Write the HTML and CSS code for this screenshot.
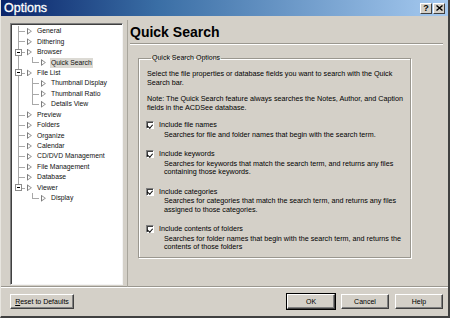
FILE: index.html
```html
<!DOCTYPE html>
<html lang="en">
<head>
    <meta charset="UTF-8">
    <title>Options</title>
    <link rel="stylesheet" href="styles.css">
</head>
<body>
    <div class="window">
        <!-- Title bar -->
        <div class="titlebar">
            <span class="title">Options</span>
            <div class="caption-btns">
                <span class="cap-btn help">?</span>
                <span class="cap-btn">
                    <svg width="7" height="6" viewBox="0 0 7 6"><path d="M0.5 0.5 L6.5 5.5 M6.5 0.5 L0.5 5.5" stroke="#000" stroke-width="1.4"/></svg>
                </span>
            </div>
        </div>

        <div class="main">
            <!-- Options tree -->
            <div class="tree">
                <div class="node"><span class="guide tee"></span><span class="arrow"></span><span class="label">General</span></div>
                <div class="node"><span class="guide tee"></span><span class="arrow"></span><span class="label">Dithering</span></div>
                <div class="node"><span class="guide tee"><span class="box"></span></span><span class="arrow"></span><span class="label">Browser</span></div>
                <div class="node"><span class="guide pipe"></span><span class="guide elbow"></span><span class="arrow"></span><span class="label selected">Quick Search</span></div>
                <div class="node"><span class="guide tee"><span class="box"></span></span><span class="arrow"></span><span class="label">File List</span></div>
                <div class="node"><span class="guide pipe"></span><span class="guide tee"></span><span class="arrow"></span><span class="label">Thumbnail Display</span></div>
                <div class="node"><span class="guide pipe"></span><span class="guide tee"></span><span class="arrow"></span><span class="label">Thumbnail Ratio</span></div>
                <div class="node"><span class="guide pipe"></span><span class="guide elbow"></span><span class="arrow"></span><span class="label">Details View</span></div>
                <div class="node"><span class="guide tee"></span><span class="arrow"></span><span class="label">Preview</span></div>
                <div class="node"><span class="guide tee"></span><span class="arrow"></span><span class="label">Folders</span></div>
                <div class="node"><span class="guide tee"></span><span class="arrow"></span><span class="label">Organize</span></div>
                <div class="node"><span class="guide tee"></span><span class="arrow"></span><span class="label">Calendar</span></div>
                <div class="node"><span class="guide tee"></span><span class="arrow"></span><span class="label">CD/DVD Management</span></div>
                <div class="node"><span class="guide tee"></span><span class="arrow"></span><span class="label">File Management</span></div>
                <div class="node"><span class="guide tee"></span><span class="arrow"></span><span class="label">Database</span></div>
                <div class="node"><span class="guide elbow"><span class="box"></span></span><span class="arrow"></span><span class="label">Viewer</span></div>
                <div class="node"><span class="guide"></span><span class="guide elbow"></span><span class="arrow"></span><span class="label">Display</span></div>
            </div>

            <!-- Quick Search page -->
            <div class="page">
                <h1>Quick Search</h1>
                <div class="rule"></div>

                <fieldset class="group">
                    <legend>Quick Search Options</legend>
                    <p>Select the file properties or database fields you want to search with the Quick<br>Search bar.</p>
                    <p>Note: The Quick Search feature always searches the Notes, Author, and Caption<br>fields in the ACDSee database.</p>

                    <div class="opt">
                        <div class="check-row"><span class="checkbox"></span>Include file names</div>
                        <div class="desc">Searches for file and folder names that begin with the search term.</div>
                    </div>
                    <div class="opt">
                        <div class="check-row"><span class="checkbox"></span>Include keywords</div>
                        <div class="desc">Searches for keywords that match the search term, and returns any files<br>containing those keywords.</div>
                    </div>
                    <div class="opt">
                        <div class="check-row"><span class="checkbox"></span>Include categories</div>
                        <div class="desc">Searches for categories that match the search term, and returns any files<br>assigned to those categories.</div>
                    </div>
                    <div class="opt">
                        <div class="check-row"><span class="checkbox"></span>Include contents of folders</div>
                        <div class="desc">Searches for folder names that begin with the search term, and returns the<br>contents of those folders</div>
                    </div>
                </fieldset>
            </div>
        </div>

        <!-- Dialog buttons -->
        <div class="footer">
            <button class="btn reset"><u>R</u>eset to Defaults</button>
            <div class="btn-group">
                <button class="btn default">OK</button>
                <button class="btn">Cancel</button>
                <button class="btn">Help</button>
            </div>
        </div>
    </div>
</body>
</html>
```

FILE: styles.css
```css
body {
    margin: 0;
    padding: 0;
    font-family: "Liberation Sans", Arial, sans-serif;
    background-color: #d4d0c8;
}

.window {
    width: 450px;
    height: 318px;
    box-sizing: border-box;
    background-color: #d4d0c8;
    border-left: 1px solid #e8e6e0;
    border-right: 2px solid #404040;
    border-bottom: 2px solid #404040;
    display: flex;
    flex-direction: column;
    color: #000;
}

/* Title bar */
.titlebar {
    height: 16px;
    flex: none;
    display: flex;
    align-items: center;
    justify-content: space-between;
    padding: 0 3px 0 3px;
    background: linear-gradient(to right, #0a246a 0%, #3a6ea5 35%, #a6caf0 100%);
}

.title {
    color: #fff;
    font-size: 12.5px;
    -webkit-text-stroke: 0.3px #fff;
}

.caption-btns {
    display: flex;
    gap: 1px;
}

.cap-btn {
    width: 12px;
    height: 11px;
    box-sizing: border-box;
    background-color: #d4d0c8;
    border: 1px solid;
    border-color: #fff #404040 #404040 #fff;
    display: flex;
    align-items: center;
    justify-content: center;
    font-size: 9px;
    font-weight: bold;
    line-height: 1;
}

/* Main area */
.main {
    flex: none;
    height: 271px;
    display: flex;
    border-bottom: 1px solid #ffffff;
    box-shadow: inset 0 -1px 0 #9a978f;
}

/* Tree */
.tree {
    width: 113px;
    height: 262px;
    box-sizing: border-box;
    margin: 7px 0 0 9px;
    padding: 2px 0 0 0;
    background-color: #fff;
    border: 1px solid;
    border-color: #808080 #f4f4f4 #f4f4f4 #808080;
    box-shadow: inset 1px 1px 0 #404040;
    font-size: 6.8px;
}

.node {
    height: 10.44px;
    display: flex;
    align-items: center;
    white-space: nowrap;
}

.guide {
    width: 14px;
    height: 100%;
    flex: none;
    display: flex;
    align-items: center;
    justify-content: center;
}

.pipe {
    background: linear-gradient(#a8a8a8, #a8a8a8) 7px 0 / 1px 100% no-repeat;
}

.tee {
    background:
        linear-gradient(#a8a8a8, #a8a8a8) 7px 0 / 1px 100% no-repeat,
        linear-gradient(#a8a8a8, #a8a8a8) 7px 5px / 8px 1px no-repeat;
}

.elbow {
    background:
        linear-gradient(#a8a8a8, #a8a8a8) 7px 0 / 1px 5.5px no-repeat,
        linear-gradient(#a8a8a8, #a8a8a8) 7px 5px / 8px 1px no-repeat;
}

.box {
    width: 7px;
    height: 7px;
    box-sizing: border-box;
    margin-left: 1px;
    border: 1px solid #8c8c8c;
    background:
        linear-gradient(#000, #000) 1px 2px / 3px 1px no-repeat,
        #fff;
}

.arrow {
    width: 5px;
    height: 7px;
    flex: none;
    margin: 0 5px 0 2px;
    background: linear-gradient(to right, #7a7a7a, #9a9a9a);
    clip-path: polygon(0 0, 100% 50%, 0 100%);
    position: relative;
}

.arrow::after {
    content: "";
    position: absolute;
    left: 1px;
    top: 1.6px;
    width: 2.7px;
    height: 3.8px;
    background: #fff;
    clip-path: polygon(0 0, 100% 50%, 0 100%);
}

.label {
    line-height: 10px;
    color: #111;
}

.label.selected {
    background-color: #dcdad4;
    padding: 0 1px;
    margin-left: -1px;
}

/* Page */
.page {
    flex: 1;
    margin: 4px 0 0 4px;
    padding: 4px 5px 0 2px;
    border-left: 1px solid #a8a59c;
}

h1 {
    margin: 0;
    font-size: 14px;
    line-height: 16px;
    font-weight: bold;
}

.rule {
    height: 0;
    margin: 3px 0 0 0;
    border-top: 1px solid #9a978f;
    border-bottom: 1px solid #fff;
}

.group {
    width: 273px;
    height: 204px;
    box-sizing: border-box;
    margin: 9px 0 0 8px;
    padding: 8px 0 0 8px;
    border: 1px solid #9a978f;
    box-shadow: 1px 1px 0 #fff, inset 1px 1px 0 #fff;
    font-size: 7.2px;
    line-height: 8.5px;
}

legend {
    padding: 0 1px;
    margin-left: 4px;
    line-height: 8px;
    font-size: 7px;
}

.group p {
    margin: 0 0 8px 0;
}

.opt {
    margin-bottom: 10px;
}

.check-row {
    height: 10.5px;
    display: flex;
    align-items: center;
    margin-left: -1px;
}

.checkbox {
    width: 8px;
    height: 8px;
    box-sizing: border-box;
    margin-right: 5px;
    border: 1px solid;
    border-color: #808080 #fff #fff #808080;
    box-shadow: inset 1px 1px 0 #404040;
    background-color: #fff;
    display: inline-block;
    position: relative;
}

.checkbox::after {
    content: "";
    position: absolute;
    left: 1px;
    top: 0.5px;
    width: 2.5px;
    height: 4px;
    border: solid #000;
    border-width: 0 1.4px 1.4px 0;
    transform: rotate(40deg);
}

.desc {
    padding-left: 17px;
}

/* Footer */
.footer {
    flex: 1;
    display: flex;
    justify-content: space-between;
    align-items: flex-start;
    padding: 6px 5px 0 9px;
}

.btn-group {
    display: flex;
    gap: 6px;
}

.btn {
    height: 15px;
    width: 48px;
    padding: 0;
    font-family: "Liberation Sans", Arial, sans-serif;
    font-size: 7px;
    color: #000;
    background-color: #d4d0c8;
    border: 1px solid;
    border-color: #fff #404040 #404040 #fff;
    box-shadow: inset -1px -1px 0 #808080;
    cursor: pointer;
}

.btn.reset {
    width: 64px;
}

.btn.default {
    outline: 1px solid #000;
}
```
